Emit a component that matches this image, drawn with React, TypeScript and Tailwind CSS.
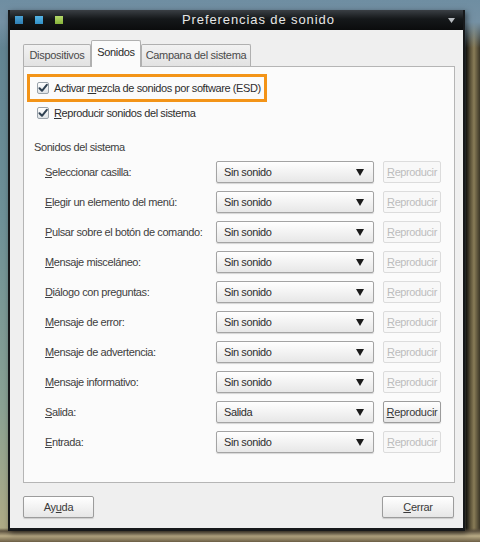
import type { ReactNode } from 'react';

const font = { fontFamily: '"Liberation Sans", Arial, sans-serif' };

const rows: { label: string; key: string; rest: string; value: string; enabled?: boolean }[] = [
  { key: 'S', rest: 'eleccionar casilla:', label: 'select', value: 'Sin sonido' },
  { key: 'E', rest: 'legir un elemento del menú:', label: 'menu', value: 'Sin sonido' },
  { key: 'P', rest: 'ulsar sobre el botón de comando:', label: 'button', value: 'Sin sonido' },
  { key: 'M', rest: 'ensaje misceláneo:', label: 'misc', value: 'Sin sonido' },
  { key: 'D', rest: 'iálogo con preguntas:', label: 'question', value: 'Sin sonido' },
  { key: 'M', rest: 'ensaje de error:', label: 'error', value: 'Sin sonido' },
  { key: 'M', rest: 'ensaje de advertencia:', label: 'warning', value: 'Sin sonido' },
  { key: 'M', rest: 'ensaje informativo:', label: 'info', value: 'Sin sonido' },
  { key: 'S', rest: 'alida:', label: 'exit', value: 'Salida', enabled: true },
  { key: 'E', rest: 'ntrada:', label: 'enter', value: 'Sin sonido' },
];

function Checkbox() {
  return (
    <span className="flex h-[12px] w-[12px] items-center justify-center rounded-[2px] border border-[#9aa3ab] bg-[linear-gradient(#ffffff,#dfe3e6)]">
      <svg width="10" height="10" viewBox="0 0 10 10">
        <path d="M1.5 5.2 L4 7.8 L8.8 1.8" fill="none" stroke="#2f4152" strokeWidth="2" strokeLinecap="round" strokeLinejoin="round" />
      </svg>
    </span>
  );
}

function Button({ children, className }: { children: ReactNode; className?: string }) {
  return (
    <button className={`flex h-[22px] items-center justify-center rounded-[2px] border border-[#9c9c9c] bg-[linear-gradient(#ffffff,#e6e6e6)] text-[11px] tracking-[-0.3px] text-[#3a3a3a] shadow-[0_1px_1px_rgba(0,0,0,0.15)] ${className ?? ''}`}>
      {children}
    </button>
  );
}

export default function App() {
  return (
    <div
      style={font}
      className="h-[542px] w-[480px] overflow-hidden pl-[8px] pt-[10px] bg-[linear-gradient(to_bottom,#6f8ea2_0,#7591a4_22px,transparent_48px),linear-gradient(to_bottom,transparent_528px,#5d5240_531px,#b9ab86_536px,#6b5e45_542px),linear-gradient(to_right,transparent_464px,#1f1e18_466px,#5c5339_470px,#8a7d58_474px,#3a3526_480px),linear-gradient(to_bottom,#5f8090_0,#6e9198_40%,#8aa294_75%,#b3ac84_100%)]"
    >
      <div className="flex h-[521px] w-[457px] flex-col border-x-2 border-b-[3px] border-[#17191b] shadow-[2px_2px_6px_rgba(0,0,0,0.5)]">
        {/* title bar */}
        <div className="flex h-[20px] items-center bg-[linear-gradient(#3a3f44,#15181a_45%,#0b0c0d)]">
          <span className="ml-[5px] h-[8px] w-[8px] bg-[linear-gradient(#4aa3d6,#2f7fb3)]" />
          <span className="ml-[12px] h-[8px] w-[8px] bg-[linear-gradient(#55b5e6,#3290c6)]" />
          <span className="ml-[12px] h-[8px] w-[8px] bg-[linear-gradient(#b4d96a,#86b23a)]" />
          <span className="ml-[119px] text-[13px] tracking-[0.9px] text-[#e6e6e6]">Preferencias de sonido</span>
          <svg className="ml-auto mr-[8px]" width="7" height="5" viewBox="0 0 7 5">
            <path d="M0 0 H7 L3.5 5 Z" fill="#b8bcc0" />
          </svg>
        </div>

        {/* body */}
        <div className="flex flex-1 flex-col bg-[#efefef] pl-[13px] pr-[8px] pt-[10px]">
          {/* tabs */}
          <div className="flex h-[26px] items-end text-[11px] tracking-[-0.3px] text-[#4a4a4a]">
            <div className="flex h-[22px] w-[68px] items-center justify-center rounded-t-[2px] border border-b-0 border-[#b0b0b0] bg-[linear-gradient(#f2f2f2,#e2e2e2)]">
              Dispositivos
            </div>
            <div className="relative z-10 -mb-px flex h-[27px] w-[50px] items-center justify-center rounded-t-[2px] border border-b-0 border-[#b0b0b0] bg-[#fbfbfb] pb-[3px] text-[#2a2a2a]">
              Sonidos
            </div>
            <div className="flex h-[22px] w-[110px] items-center justify-center rounded-t-[2px] border border-b-0 border-[#b0b0b0] bg-[linear-gradient(#f2f2f2,#e2e2e2)]">
              Campana del sistema
            </div>
          </div>

          {/* panel */}
          <div className="flex h-[417px] w-[432px] flex-col border border-[#b5b5b5] bg-[#fbfbfb] text-[11px] tracking-[-0.4px] text-[#404040]">
            <div className="ml-[3px] mt-[7px] flex h-[28px] w-[240px] items-center gap-[5px] border-[3px] border-[#f39418] pl-[7px]">
              <Checkbox />
              <span className="text-[#2e2e2e]">
                Activar <u>m</u>ezcla de sonidos por software (ESD)
              </span>
            </div>
            <div className="ml-[13px] mt-[3px] flex h-[16px] items-center gap-[5px]">
              <Checkbox />
              <span className="text-[#2e2e2e]">
                <u>R</u>eproducir sonidos del sistema
              </span>
            </div>

            <div className="ml-[10px] mt-[19px] h-[14px] leading-[14px]">Sonidos del sistema</div>

            <div className="mt-[7px] flex flex-col gap-[8px]">
              {rows.map((r) => (
                <div key={r.label} className="flex h-[22px] items-center">
                  <span className="ml-[21px] w-[171px]">
                    <u>{r.key}</u>
                    {r.rest}
                  </span>
                  <div className="flex h-[22px] w-[158px] items-center justify-between rounded-[2px] border border-[#a4a4a4] bg-[linear-gradient(#ffffff,#e7e7e7)] pl-[7px] pr-[9px] text-[#2e2e2e] shadow-[0_1px_1px_rgba(0,0,0,0.15)]">
                    <span>{r.value}</span>
                    <svg width="8" height="7" viewBox="0 0 8 7">
                      <path d="M0 0 H8 L4 7 Z" fill="#1c1c1c" />
                    </svg>
                  </div>
                  {r.enabled ? (
                    <Button className="ml-[9px] w-[58px]">
                      <span>
                        <u>R</u>eproducir
                      </span>
                    </Button>
                  ) : (
                    <div className="ml-[9px] flex h-[22px] w-[58px] items-center justify-center rounded-[2px] border border-[#dcdcdc] bg-[#f8f8f8] text-[#bdbdbd]">
                      <span>
                        <u>R</u>eproducir
                      </span>
                    </div>
                  )}
                </div>
              ))}
            </div>
          </div>

          {/* footer */}
          <div className="mt-[13px] flex">
            <Button className="w-[71px]">
              <span>
                Ay<u>u</u>da
              </span>
            </Button>
            <Button className="ml-auto mr-[1px] w-[72px]">
              <span>
                <u>C</u>errar
              </span>
            </Button>
          </div>
        </div>
      </div>
    </div>
  );
}
